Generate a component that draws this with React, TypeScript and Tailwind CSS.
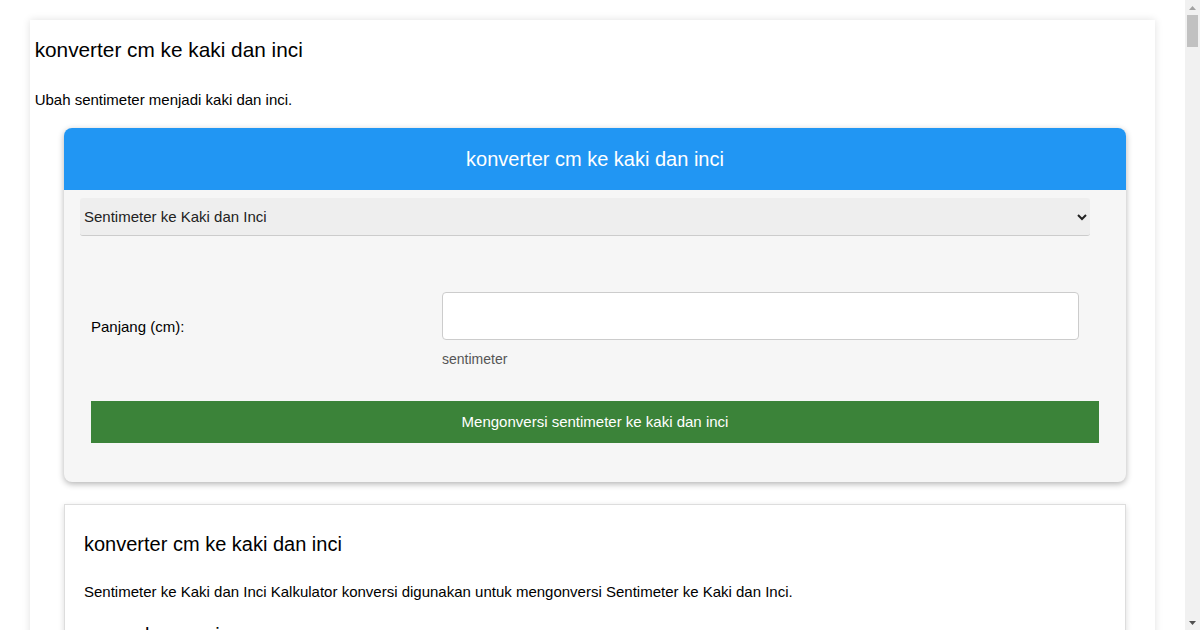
function Scrollbar() {
    return (
        <div className="flex h-[630px] w-[15px] shrink-0 flex-col bg-[#f1f1f1]">
            <div className="flex h-[15px] items-center justify-center">
                <svg width="7" height="4" viewBox="0 0 7 4">
                    <path d="M3.5 0L7 4H0z" fill="#a3a3a3" />
                </svg>
            </div>
            <div className="mx-[2px] h-[32px] bg-[#c1c1c1]" />
            <div className="flex-1" />
            <div className="flex h-[15px] items-center justify-center">
                <svg width="7" height="4" viewBox="0 0 7 4">
                    <path d="M0 0H7L3.5 4z" fill="#505050" />
                </svg>
            </div>
        </div>
    );
}

export default function App() {
    return (
        <div className="flex h-[630px] overflow-hidden bg-white font-['Liberation_Sans',Arial,sans-serif] text-black">
            <div className="min-w-0 flex-1">
                <div className="mx-auto mt-5 mb-10 w-[95%] bg-white pl-[5px] pt-[18px] pb-10 shadow-[0_0_8px_rgba(0,0,0,0.12)]">
                    <h1 className="text-[20.8px] leading-[24px]">konverter cm ke kaki dan inci</h1>
                    <p className="mt-[29px] text-[15px] leading-[17px]">Ubah sentimeter menjadi kaki dan inci.</p>

                    {/* Converter card */}
                    <div className="mx-auto mt-[20px] w-[1062px] overflow-hidden rounded-lg bg-[#f6f6f6] shadow-[0_2px_6px_rgba(0,0,0,0.3)]">
                        <div className="flex h-[62px] items-center justify-center bg-[#2196f3] text-[20px] text-white">
                            konverter cm ke kaki dan inci
                        </div>
                        <div className="px-4 pt-2 pb-[39px]">
                            <select className="h-[38px] w-[1010px] rounded-[3px] border-b border-[#ccc] bg-[#eeeeee] pl-0 text-[15px] text-[#222] outline-none">
                                <option>Sentimeter ke Kaki dan Inci</option>
                            </select>

                            <div className="mt-[56px] grid grid-cols-[351px_637px] items-center pl-[11px]">
                                <label className="pb-[6px] text-[15px] leading-[17px]">Panjang (cm):</label>
                                <div>
                                    <input
                                        type="text"
                                        className="block h-[48px] w-full rounded-[4px] border border-[#ccc] bg-white px-3 text-[15px] outline-none"
                                    />
                                    <div className="mt-[11px] text-[14px] leading-[16px] text-[#555]">sentimeter</div>
                                </div>
                            </div>

                            <button className="mt-[34px] ml-[11px] flex h-[42px] w-[1008px] items-center justify-center bg-[#3b8339] text-[15px] text-white">
                                Mengonversi sentimeter ke kaki dan inci
                            </button>
                        </div>
                    </div>

                    {/* Info card */}
                    <div className="mx-auto mt-[22px] w-[1062px] border border-[#ddd] bg-white pr-5 pl-[19px] pt-[28px] pb-8 shadow-[0_2px_6px_rgba(0,0,0,0.15)]">
                        <h2 className="text-[20px] leading-[23px]">konverter cm ke kaki dan inci</h2>
                        <p className="mt-[27px] text-[15px] leading-[17px]">
                            Sentimeter ke Kaki dan Inci Kalkulator konversi digunakan untuk mengonversi Sentimeter ke Kaki dan Inci.
                        </p>
                        <h3 className="mt-6 text-[20px] leading-[23px]">rumus konversi</h3>
                        <p className="mt-5 text-[15px] leading-[22px]">1 kaki = 30,48 cm, 1 inci = 2,54 cm</p>
                    </div>
                </div>
            </div>
            <Scrollbar />
        </div>
    );
}
